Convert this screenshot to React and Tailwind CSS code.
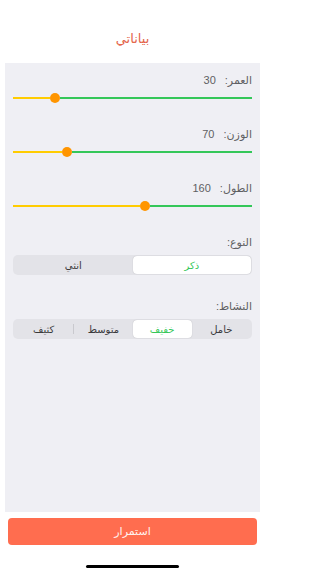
const sliders = [
  { label: "العمر:", value: 30, pos: 0.176 },
  { label: "الوزن:", value: 70, pos: 0.227 },
  { label: "الطول:", value: 160, pos: 0.553 },
];

const genders = ["ذكر", "انثي"];
const activity = ["خامل", "خفيف", "متوسط", "كثيف"];

function Label({ children }) {
  return (
    <div dir="rtl" className="flex h-[14px] items-center gap-[9px] text-[11px] leading-[14px] text-[#5f5f63]">
      {children}
    </div>
  );
}

function Slider({ pos }) {
  return (
    <div className="mt-[6px] flex h-[10px] items-center">
      <div className="h-[2px] bg-[#ffcc00]" style={{ width: `calc(${pos * 100}% - 5px)` }} />
      <div className="h-[10px] w-[10px] shrink-0 rounded-full bg-[#ff9500]" />
      <div className="h-[2px] flex-1 bg-[#34c759]" />
    </div>
  );
}

function Segmented({ items, selected, sepAfter }) {
  return (
    <div dir="rtl" className="mt-[6px] flex h-[20px] items-center rounded-[5px] bg-[#e3e3e8] p-[1px]">
      {items.map((it, i) => (
        <div key={it} className="flex h-full flex-1 items-center">
          <div
            className={`flex h-full flex-1 items-center justify-center rounded-[4px] text-[10px] ${
              i === selected ? "bg-white text-[#34c759] shadow-[0_0_1px_rgba(0,0,0,0.25)]" : "text-[#3a3a3c]"
            }`}
          >
            {it}
          </div>
          {i === sepAfter && <div className="h-[10px] w-px bg-[#c9c9ce]" />}
        </div>
      ))}
    </div>
  );
}

export default function App() {
  return (
    <div className="flex h-[573px] w-[265px] flex-col bg-white font-['Liberation_Sans','DejaVu_Sans',sans-serif]">
      <div className="mt-[30px] text-center text-[13px] leading-[18px] text-[#e4644b]">بياناتي</div>

      <div className="mx-[5px] mt-[15px] h-[449px] bg-[#efeff4] px-[8px] pt-[10px]">
        {sliders.map((s, i) => (
          <div key={s.label} className={i === 0 ? "" : "mt-[24px]"}>
            <Label>
              <span>{s.label}</span>
              <span>{s.value}</span>
            </Label>
            <Slider pos={s.pos} />
          </div>
        ))}

        <div className="mt-[24px]">
          <Label>النوع:</Label>
          <Segmented items={genders} selected={0} sepAfter={-1} />
        </div>

        <div className="mt-[24px]">
          <Label>النشاط:</Label>
          <Segmented items={activity} selected={1} sepAfter={2} />
        </div>
      </div>

      <button className="mx-[8px] mt-[6px] h-[27px] rounded-[4px] bg-[#ff6d4f] text-[11px] text-[#fff3ef]">
        استمرار
      </button>

      <div className="mx-auto mt-[20px] h-[3px] w-[93px] rounded-full bg-black" />
    </div>
  );
}
